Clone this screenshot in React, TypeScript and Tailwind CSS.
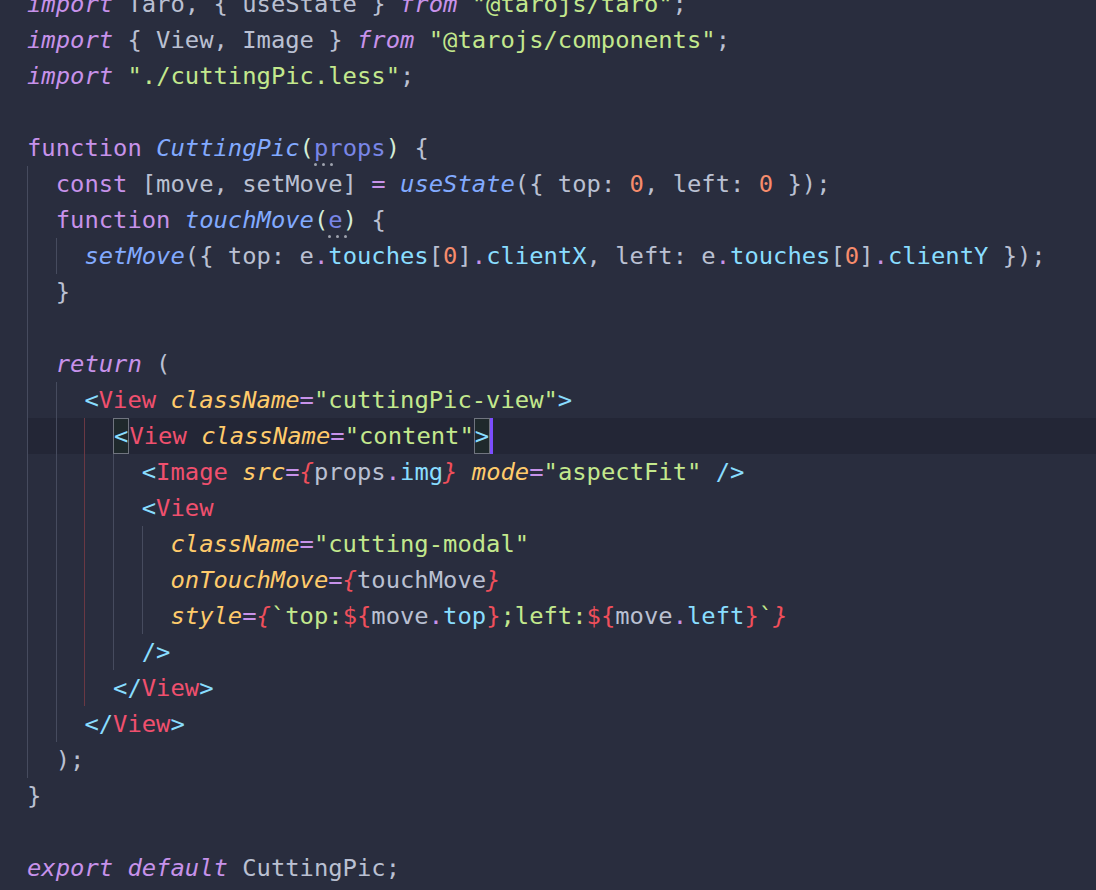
import React from "react";

type Tok = [string, string, ("dots" | "box")?];
type Line = { ind: (string | null)[]; toks: Tok[]; hl?: boolean; cursor?: boolean };

const K = "text-[#c792ea]";
const KI = "text-[#c792ea] italic";
const F = "text-[#82aaff] italic";
const S = "text-[#c3e88d]";
const N = "text-[#f78c6c]";
const D = "text-[#bac0d2]";
const P = "text-[#7986e7]";
const PB = "text-[#d3ecd6]";
const T = "text-[#f0506e]";
const B = "text-[#89ddff]";
const A = "text-[#ffcb6b] italic";
const E = "text-[#ef4f5b] italic";
const R = "text-[#ef4f5b]";
const DOT = "text-[#c792ea]";

const g = "g";
const r = "r";

const lines: Line[] = [
  { ind: [], toks: [["import", KI], [" Taro, { useState } ", D], ["from", KI], [" ", D], ['"@tarojs/taro"', S], [";", D]] },
  { ind: [], toks: [["import", KI], [" { View, Image } ", D], ["from", KI], [" ", D], ['"@tarojs/components"', S], [";", D]] },
  { ind: [], toks: [["import", KI], [" ", D], ['"./cuttingPic.less"', S], [";", D]] },
  { ind: [], toks: [] },
  { ind: [], toks: [["function", K], [" ", D], ["CuttingPic", F], ["(", PB], ["props", P, "dots"], [")", PB], [" {", D]] },
  { ind: [g], toks: [["const", K], [" [move, setMove] ", D], ["=", K], [" ", D], ["useState", F], ["({ top: ", D], ["0", N], [", left: ", D], ["0", N], [" });", D]] },
  { ind: [g], toks: [["function", K], [" ", D], ["touchMove", F], ["(", PB], ["e", P, "dots"], [")", PB], [" {", D]] },
  {
    ind: [g, g],
    toks: [
      ["setMove", F], ["({ top: e", D], [".", DOT], ["touches", B], ["[", D], ["0", N], ["]", D], [".", DOT], ["clientX", B],
      [", left: e", D], [".", DOT], ["touches", B], ["[", D], ["0", N], ["]", D], [".", DOT], ["clientY", B], [" });", D],
    ],
  },
  { ind: [g], toks: [["}", D]] },
  { ind: [g], toks: [] },
  { ind: [g], toks: [["return", KI], [" (", D]] },
  { ind: [g, g], toks: [["<", B], ["View", T], [" ", D], ["className", A], ["=", K], ['"cuttingPic-view"', S], [">", B]] },
  { ind: [g, g, r], hl: true, cursor: true, toks: [["<", B, "box"], ["View", T], [" ", D], ["className", A], ["=", K], ['"content"', S], [">", B, "box"]] },
  {
    ind: [g, g, r, g],
    toks: [["<", B], ["Image", T], [" ", D], ["src", A], ["=", K], ["{", E], ["props", D], [".", DOT], ["img", B], ["}", E], [" ", D], ["mode", A], ["=", K], ['"aspectFit"', S], [" ", D], ["/>", B]],
  },
  { ind: [g, g, r, g], toks: [["<", B], ["View", T]] },
  { ind: [g, g, r, g, g], toks: [["className", A], ["=", K], ['"cutting-modal"', S]] },
  { ind: [g, g, r, g, g], toks: [["onTouchMove", A], ["=", K], ["{", E], ["touchMove", D], ["}", E]] },
  {
    ind: [g, g, r, g, g],
    toks: [
      ["style", A], ["=", K], ["{", E], ["`top:", S], ["${", R], ["move", D], [".", DOT], ["top", B], ["}", R],
      [";left:", S], ["${", R], ["move", D], [".", DOT], ["left", B], ["}", R], ["`", S], ["}", E],
    ],
  },
  { ind: [g, g, r, g], toks: [["/>", B]] },
  { ind: [g, g, r], toks: [["</", B], ["View", T], [">", B]] },
  { ind: [g, g], toks: [["</", B], ["View", T], [">", B]] },
  { ind: [g], toks: [[");", D]] },
  { ind: [], toks: [["}", D]] },
  { ind: [], toks: [] },
  { ind: [], toks: [["export default", KI], [" CuttingPic;", D]] },
];

function Indent({ kind }: { kind: string | null }) {
  if (kind === "g") return <span className="h-[36px] w-[2ch] shrink-0 border-l border-[#464b5e]" />;
  if (kind === "r") return <span className="h-[36px] w-[2ch] shrink-0 border-l border-[#6a3843]" />;
  return <span className="h-[36px] w-[2ch] shrink-0" />;
}

function Token({ t }: { t: Tok }) {
  const [text, cls, special] = t;
  if (special === "box") {
    return (
      <span className={`h-[36px] border border-[#70747f] bg-[#1f292c] leading-[34px] ${cls}`}>{text}</span>
    );
  }
  if (special === "dots") {
    return (
      <span className={`relative ${cls}`}>
        {text}
        <span className="absolute bottom-[0px] left-0 flex gap-[5px]">
          <span className="h-[3px] w-[3px] rounded-full bg-[#9ea2ae]" />
          <span className="h-[3px] w-[3px] rounded-full bg-[#9ea2ae]" />
          <span className="h-[3px] w-[3px] rounded-full bg-[#9ea2ae]" />
        </span>
      </span>
    );
  }
  return <span className={cls}>{text}</span>;
}

export default function App() {
  return (
    <div className="h-screen w-full overflow-hidden bg-[#292d3e] font-['DejaVu_Sans_Mono',monospace] text-[23.84px]">
      <div className="mt-[-14px] pl-[27px]">
        {lines.map((ln, i) => (
          <div
            key={i}
            className={`flex h-[36px] items-start whitespace-pre leading-[36px] ${ln.hl ? "bg-[#232636]" : ""}`}
          >
            {ln.ind.map((k, j) => (
              <Indent key={j} kind={k} />
            ))}
            {ln.toks.map((t, j) => (
              <Token key={j} t={t} />
            ))}
            {ln.cursor ? <span className="h-[36px] w-[3px] bg-[#7c4dff]" /> : null}
          </div>
        ))}
      </div>
    </div>
  );
}
